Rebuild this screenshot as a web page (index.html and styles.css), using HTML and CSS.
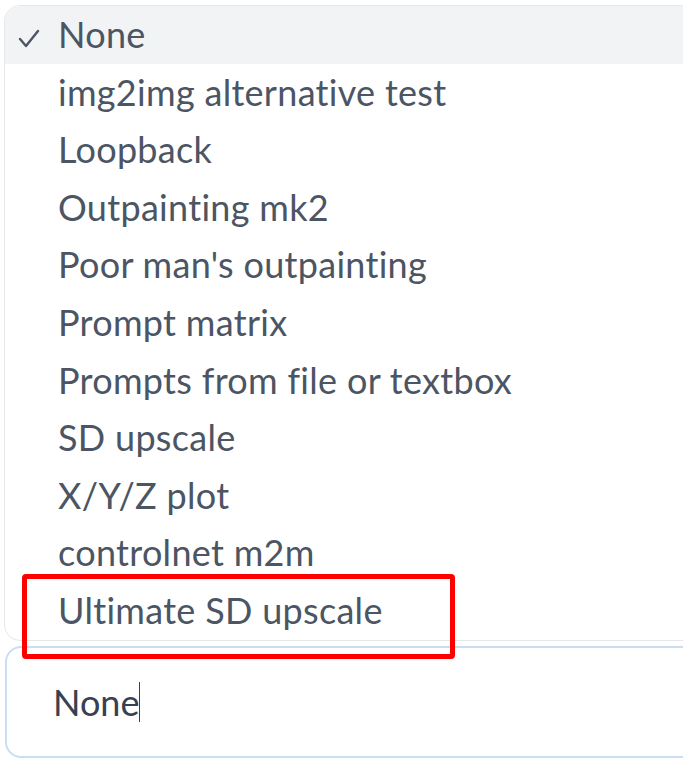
FILE: index.html
```html
<!DOCTYPE html>
<html lang="en">
<head>
    <meta charset="UTF-8">
    <title>Script dropdown</title>
    <link rel="stylesheet" href="styles.css">
</head>
<body>
    <ul class="options">
        <li class="option selected">
            <svg class="check" width="22" height="20" viewBox="0 0 22 20"><polyline points="2,10 8,17 20,2" fill="none" stroke="#4b5563" stroke-width="2.4" stroke-linecap="round" stroke-linejoin="round"/></svg>None
        </li>
        <li class="option">img2img alternative test</li>
        <li class="option">Loopback</li>
        <li class="option">Outpainting mk2</li>
        <li class="option">Poor man's outpainting</li>
        <li class="option">Prompt matrix</li>
        <li class="option">Prompts from file or textbox</li>
        <li class="option">SD upscale</li>
        <li class="option">X/Y/Z plot</li>
        <li class="option">controlnet m2m</li>
        <li class="option marked">Ultimate SD upscale</li>
    </ul>
    <div class="input-box">
        <span class="value">None</span><span class="caret"></span>
    </div>
</body>
</html>
```

FILE: styles.css
```css
body {
    margin: 0;
    background: white;
    font-family: "Source Sans Pro", Lato, "Noto Sans", sans-serif;
    color: #4b5563;
    overflow: hidden;
}
.options {
    list-style: none;
    margin: 5px -20px 0 4px;
    padding: 0;
    border: 1px solid #e5e7eb;
    border-radius: 16px;
}
.option {
    position: relative;
    height: 57.6px;
    line-height: 57.6px;
    padding-left: 53px;
    font-size: 36px;
    letter-spacing: 0.3px;
}
.selected {
    background: #f2f3f5;
    border-radius: 15px 15px 0 0;
}
.check {
    position: absolute;
    left: 13px;
    top: 23px;
}
.marked::after {
    content: "";
    position: absolute;
    left: 17px;
    top: -8px;
    width: 423px;
    height: 75px;
    border: 5px solid #ff0000;
    border-radius: 4px;
    z-index: 2;
}
.input-box {
    margin: 5px -20px 0 5px;
    height: 108px;
    border: 2px solid #c9ddf5;
    border-radius: 16px;
    display: flex;
    align-items: center;
    padding-left: 46px;
    font-size: 36px;
    color: #374151;
}
.caret {
    display: inline-block;
    width: 1px;
    height: 40px;
    background: #374151;
}
```
